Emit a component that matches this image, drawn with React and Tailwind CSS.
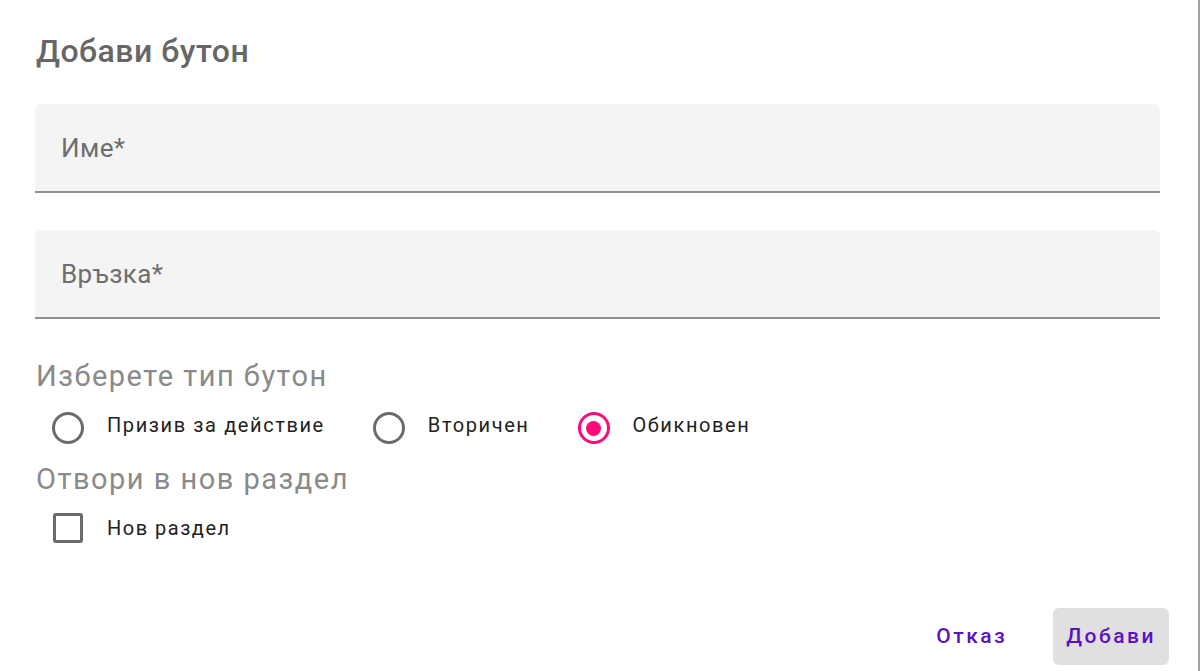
import React from "react";

const font = { fontFamily: "Roboto, 'Noto Sans', sans-serif" };

function Radio({ checked, label }) {
  return (
    <div className="flex items-center mr-[39px]">
      <div className="w-[50px] flex justify-center">
        {checked ? (
          <div className="w-[32px] h-[32px] rounded-full border-[3px] border-[#ff0a78] flex items-center justify-center">
            <div className="w-[15px] h-[15px] rounded-full bg-[#ff0a78]" />
          </div>
        ) : (
          <div className="w-[32px] h-[32px] rounded-full border-[3px] border-[#6b6b6b]" />
        )}
      </div>
      <span className="ml-[14px] mb-[6px] text-[20px] text-[#222] tracking-[1.6px] leading-[24px]">
        {label}
      </span>
    </div>
  );
}

function Field({ label }) {
  return (
    <div className="h-[89px] bg-[#f4f4f4] rounded-t-[6px] border-b-[2px] border-[#8f8f8f] flex items-center pl-[26px] pt-[2px]">
      <span className="text-[26px] text-[#6e6e6e] tracking-[0.4px]">{label}</span>
    </div>
  );
}

export default function App() {
  return (
    <div className="w-[1200px] h-[671px] bg-white relative overflow-hidden" style={font}>
      <div className="absolute right-0 top-0 bottom-0 w-[2px] bg-[#a0a0a0]" />
      <div className="pl-[35px] pr-[40px]">
        <div className="pt-[32px] h-[104px]">
          <h1 className="text-[32px] font-medium text-[#666] leading-[38px] pl-[1px] tracking-[0.5px]">
            Добави бутон
          </h1>
        </div>
        <Field label="Име*" />
        <div className="h-[37px]" />
        <Field label="Връзка*" />
        <div className="mt-[40px] text-[29px] text-[#8a8a8a] leading-[34px] pl-[1px] tracking-[1.5px]">
          Изберете тип бутон
        </div>
        <div className="flex items-center mt-[18px] h-[34px] ml-[8px]">
          <Radio label="Призив за действие" />
          <Radio label="Вторичен" />
          <Radio label="Обикновен" checked />
        </div>
        <div className="mt-[17px] text-[29px] text-[#8a8a8a] leading-[34px] pl-[1px] tracking-[1.5px]">
          Отвори в нов раздел
        </div>
        <div className="flex items-center mt-[15px] h-[34px] ml-[18px]">
          <div className="w-[30px] h-[30px] rounded-[3px] border-[3px] border-[#6b6b6b]" />
          <span className="ml-[24px] text-[20px] text-[#222] tracking-[1.5px] leading-[24px]">
            Нов раздел
          </span>
        </div>
      </div>
      <div className="flex justify-end items-center mt-[63px] pr-[31px] gap-[33px]">
        <button className="h-[57px] px-[13px] rounded-[6px] text-[21px] font-medium text-[#5a12c4] tracking-[2.5px]">
          Отказ
        </button>
        <button className="h-[57px] px-[13px] rounded-[6px] bg-[#e0e0e0] text-[21px] font-medium text-[#5a12c4] tracking-[2.5px]">
          Добави
        </button>
      </div>
    </div>
  );
}
